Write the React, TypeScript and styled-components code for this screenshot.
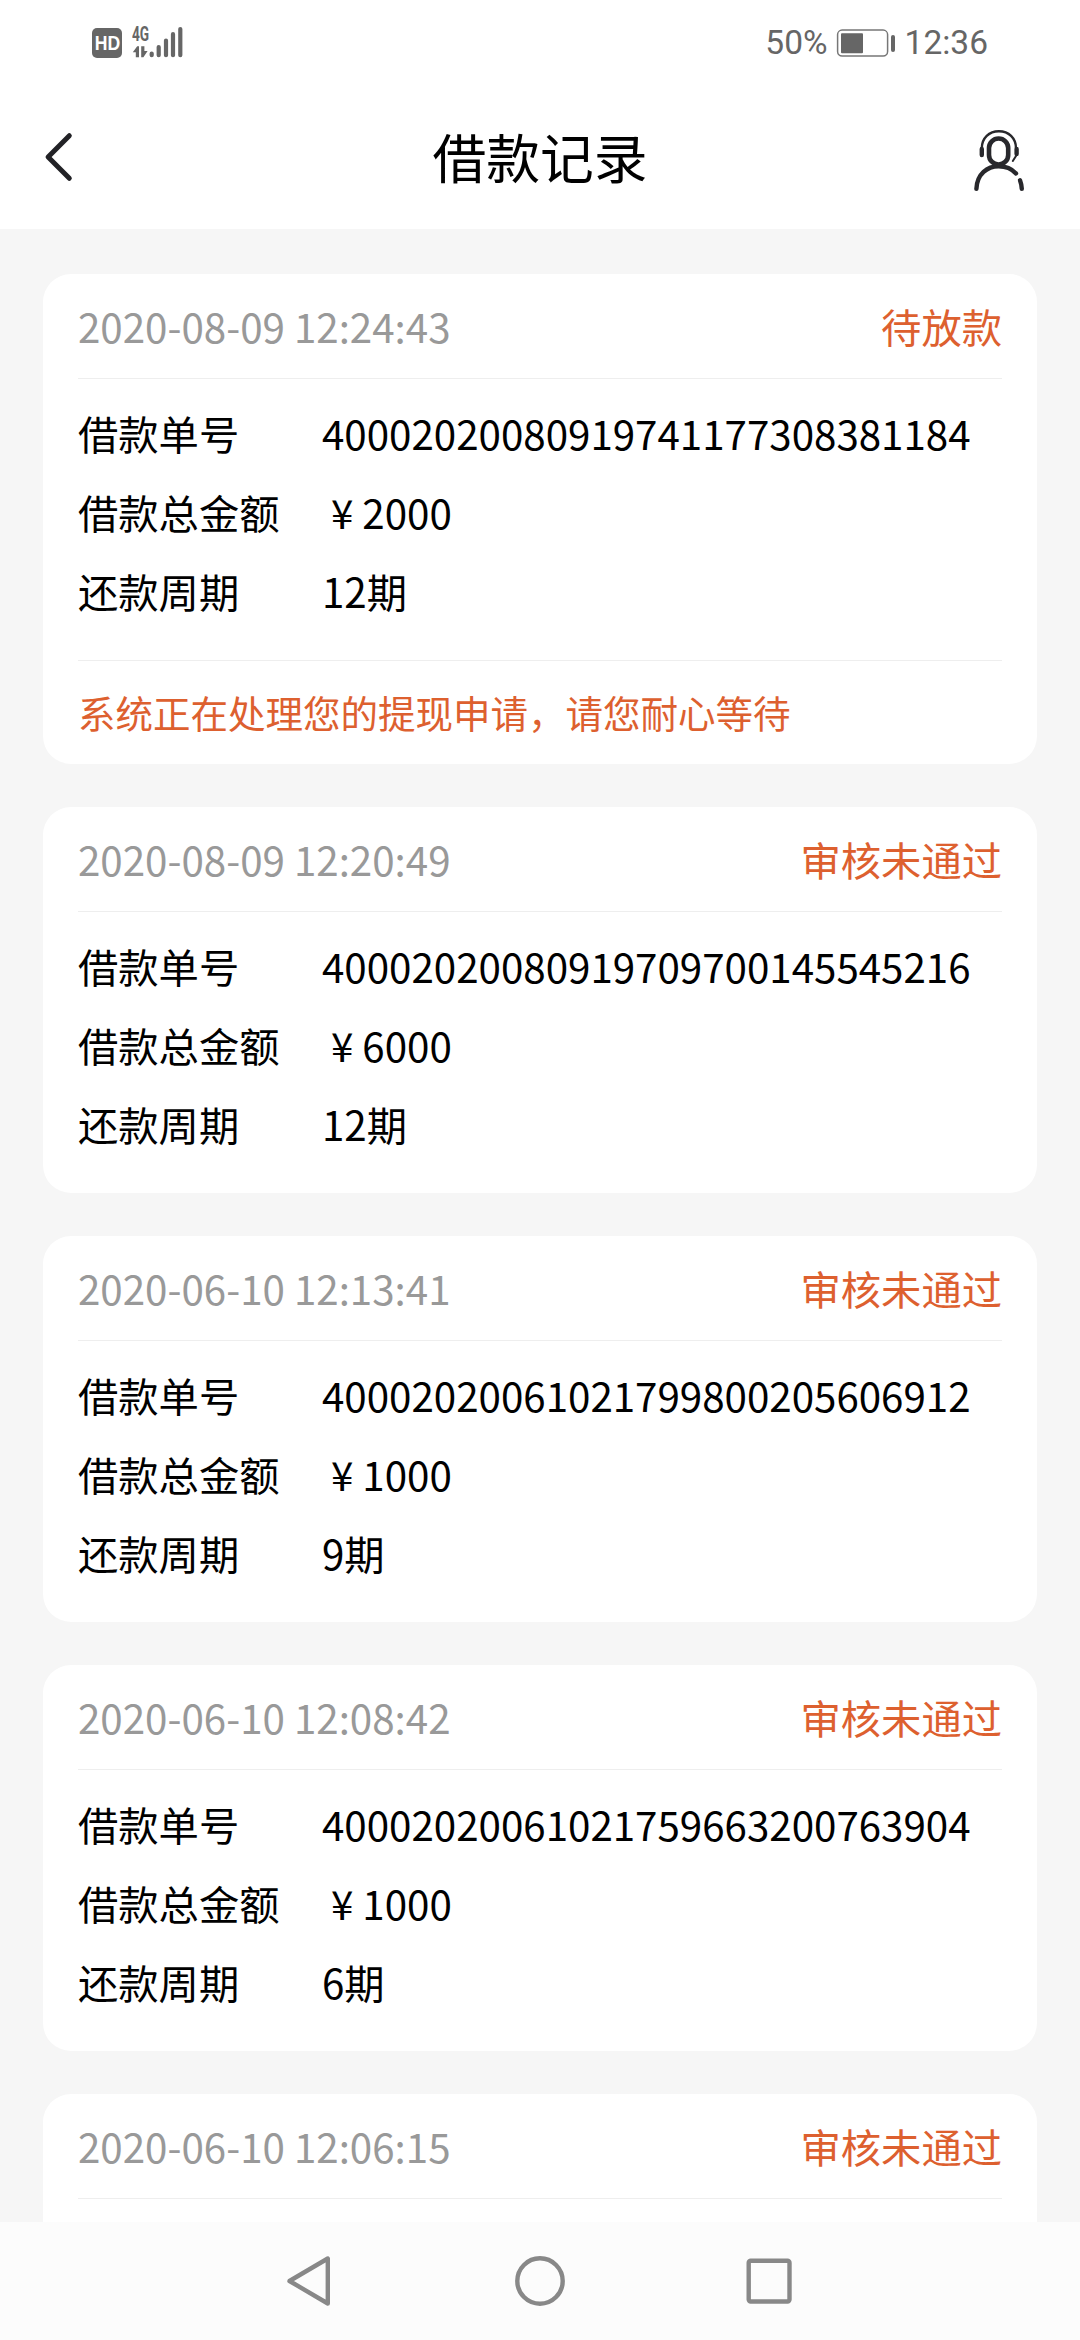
import React from 'react';
import styled, { createGlobalStyle } from 'styled-components';

const GlobalStyle = createGlobalStyle`
  * { box-sizing: border-box; }
  body { margin: 0; background: #f6f6f6; }
`;

const Screen = styled.div`
  display: flex;
  flex-direction: column;
  width: 1080px;
  height: 2340px;
  overflow: hidden;
  background: #f6f6f6;
  color: #000;
  font-family: 'Noto Sans CJK SC', sans-serif;
`;

const StatusBar = styled.div`
  flex: none;
  display: flex;
  align-items: center;
  justify-content: space-between;
  height: 86px;
  padding: 0 92px;
  background: #fff;
  color: #666;
  font-family: Roboto, sans-serif;
`;

const StatusGroup = styled.div`
  display: flex;
  align-items: center;
`;

const HdBadge = styled.span`
  display: flex;
  align-items: center;
  justify-content: center;
  width: 30px;
  height: 30px;
  border-radius: 5px;
  background: #666;
  color: #fff;
  font: 700 20px/30px 'Liberation Sans', sans-serif;
`;

const HdText = styled.span`
  flex: none;
  transform: scaleX(0.88);
`;

const Signal = styled.div`
  display: flex;
  flex-direction: column;
  margin-left: 10px;
  width: 52px;
  height: 32px;
`;

const Network = styled.span`
  height: 15px;
  font: 700 19.5px/15px Roboto, sans-serif;
  transform: scaleX(0.7);
  transform-origin: left;
`;

const SignalBars = styled.svg`
  display: block;
  margin-top: -15px;
`;

const StatusText = styled.span<{ $gap?: number }>`
  margin-left: ${(p) => p.$gap ?? 0}px;
  font-size: 33.5px;
  line-height: 40px;
`;

const Battery = styled.svg`
  display: block;
  margin-left: 8px;
`;

const TitleBar = styled.header`
  flex: none;
  display: grid;
  grid-template-columns: 160px 1fr 160px;
  align-items: center;
  height: 143px;
  background: #fff;
`;

const Title = styled.h1`
  margin: 0;
  padding-bottom: 4px;
  text-align: center;
  font-size: 53.8px;
  font-weight: 400;
  line-height: 72px;
`;

const IconButton = styled.button`
  display: block;
  width: 160px;
  height: 143px;
  padding: 0;
  border: 0;
  background: none;
  svg { display: block; }
`;

const List = styled.main`
  flex: 1;
  min-height: 0;
  overflow: hidden;
  display: flex;
  flex-direction: column;
  gap: 43px;
  padding: 45px 43px 0;
`;

const Card = styled.article`
  flex: none;
  padding: 0 35px;
  border-radius: 28px;
  background: #fff;
`;

const CardHead = styled.div`
  display: flex;
  align-items: center;
  justify-content: space-between;
  height: 105px;
  padding-bottom: 2px;
  border-bottom: 1px solid #eee;
  font-size: 40.3px;
`;

const Time = styled.time`
  color: #999;
`;

const Status = styled.span`
  color: #dd602f;
`;

const Details = styled.dl`
  margin: 0;
  height: 281px;
  padding-top: 14px;
`;

const Row = styled.div`
  display: grid;
  grid-template-columns: 244px 1fr;
  align-items: center;
  height: 79px;
  font-size: 40.3px;
`;

const Label = styled.dt``;

const Value = styled.dd`
  margin: 0;
  white-space: nowrap;
`;

const Currency = styled.span`
  display: inline-block;
  width: 1em;
  text-align: center;
`;

const Notice = styled.p`
  display: flex;
  align-items: center;
  height: 104px;
  margin: 0;
  padding-bottom: 2px;
  border-top: 1px solid #eee;
  color: #dd602f;
  font-size: 37.5px;
`;

const NavBar = styled.nav`
  flex: none;
  display: flex;
  align-items: center;
  justify-content: center;
  gap: 180px;
  height: 118px;
  background: #fcfcfc;
  svg { display: block; }
`;

interface RecordItem {
  time: string;
  status: string;
  orderNo?: string;
  amount?: number;
  term?: string;
  notice?: string;
}

const records: RecordItem[] = [
  {
    time: '2020-08-09 12:24:43',
    status: '待放款',
    orderNo: '40002020080919741177308381184',
    amount: 2000,
    term: '12期',
    notice: '系统正在处理您的提现申请，请您耐心等待',
  },
  { time: '2020-08-09 12:20:49', status: '审核未通过', orderNo: '40002020080919709700145545216', amount: 6000, term: '12期' },
  { time: '2020-06-10 12:13:41', status: '审核未通过', orderNo: '40002020061021799800205606912', amount: 1000, term: '9期' },
  { time: '2020-06-10 12:08:42', status: '审核未通过', orderNo: '40002020061021759663200763904', amount: 1000, term: '6期' },
  { time: '2020-06-10 12:06:15', status: '审核未通过' },
];

const RecordCard = ({ item }: { item: RecordItem }) => (
  <Card>
    <CardHead>
      <Time>{item.time}</Time>
      <Status>{item.status}</Status>
    </CardHead>
    <Details>
      {item.orderNo && (
        <>
          <Row>
            <Label>借款单号</Label>
            <Value>{item.orderNo}</Value>
          </Row>
          <Row>
            <Label>借款总金额</Label>
            <Value>
              <Currency>¥</Currency>
              {item.amount}
            </Value>
          </Row>
          <Row>
            <Label>还款周期</Label>
            <Value>{item.term}</Value>
          </Row>
        </>
      )}
    </Details>
    {item.notice && <Notice>{item.notice}</Notice>}
  </Card>
);

export default function App() {
  return (
    <>
      <GlobalStyle />
      <Screen>
        <StatusBar>
          <StatusGroup>
            <HdBadge>
              <HdText>HD</HdText>
            </HdBadge>
            <Signal>
              <Network>4G</Network>
              <SignalBars width="52" height="32" viewBox="0 0 52 32">
                <path
                  d="M19.7 26.6v1.6M26.7 20v8.200M34 13.500v14.700M41 7.200v21M48.300 2.100v26.100"
                  stroke="#666"
                  strokeWidth="4.2"
                  strokeLinecap="round"
                />
                <path d="M0.8 25.200 5.200 19.300H7v11H3.800v-5.100zM9.200 19.300h3.200v4.800h3.200L11.400 30.300H9.200z" fill="#666" />
              </SignalBars>
            </Signal>
          </StatusGroup>
          <StatusGroup>
            <StatusText>50%</StatusText>
            <Battery width="60" height="30" viewBox="0 0 60 30">
              <rect x="1.6" y="2.1" width="50" height="26" rx="4.5" fill="none" stroke="#777" strokeWidth="1.5" />
              <rect x="5" y="5.3" width="22" height="20" rx="1" fill="#666" />
              <rect x="55" y="7" width="4" height="17" rx="2" fill="#666" />
            </Battery>
            <StatusText $gap={9}>12:36</StatusText>
          </StatusGroup>
        </StatusBar>
        <TitleBar>
          <IconButton aria-label="返回">
            <svg width="160" height="143" viewBox="0 86 160 143">
              <path d="M69.3 135.700 48.100 157 69.300 178.300" fill="none" stroke="#222226" strokeWidth="5" strokeLinecap="round" strokeLinejoin="round" />
            </svg>
          </IconButton>
          <Title>借款记录</Title>
          <IconButton aria-label="客服">
            <svg width="160" height="143" viewBox="920 86 160 143">
              <g fill="none" stroke="#28282c" strokeLinecap="round">
                <rect x="989" y="138.500" width="19.200" height="26" rx="9.600" strokeWidth="4.600" />
                <path d="M976.400 188.800C977 174 987.500 166.200 998.600 166.200C1005.500 166.200 1012 169 1016 173.400" strokeWidth="4.400" />
                <path d="M1020 180.200Q1021.600 184.500 1021.800 188.800" strokeWidth="4.400" />
                <path d="M981.800 148C982 138 989 131.200 998.900 131.200S1015.800 138 1016 148" strokeWidth="2.400" />
                <path d="M981.800 149v6M1016.600 149v5" strokeWidth="4.400" />
                <path d="M1016 156 1012.800 161" strokeWidth="2" />
              </g>
            </svg>
          </IconButton>
        </TitleBar>
        <List>
          {records.map((item) => (
            <RecordCard key={item.time} item={item} />
          ))}
        </List>
        <NavBar>
          <svg width="50" height="56" viewBox="285 2253 50 56" fill="none" stroke="#888" strokeWidth="4.4" strokeLinejoin="round">
            <path d="M327.800 2258.500v45L289.500 2281z" />
          </svg>
          <svg width="50" height="56" viewBox="515 2253 50 56" fill="none" stroke="#888" strokeWidth="4.4">
            <circle cx="540" cy="2281" r="22.700" />
          </svg>
          <svg width="50" height="56" viewBox="745 2253 50 56" fill="none" stroke="#888" strokeWidth="4.4">
            <rect x="748.700" y="2260.700" width="40.800" height="40.800" rx="2" />
          </svg>
        </NavBar>
      </Screen>
    </>
  );
}
